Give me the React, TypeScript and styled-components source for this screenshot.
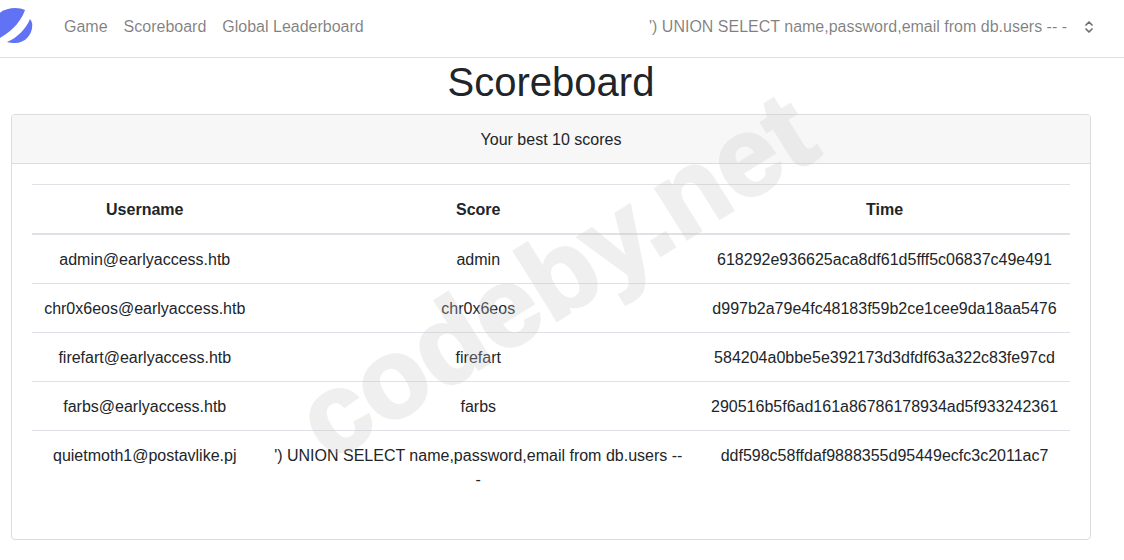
import React from "react";
import styled, { createGlobalStyle } from "styled-components";

const Global = createGlobalStyle`
  html, body { margin: 0; padding: 0; background: #fff; }
  body {
    font-family: "Liberation Sans", Arial, sans-serif;
    font-size: 16px;
    line-height: 1.5;
    color: #212529;
    overflow: hidden;
  }
`;

const Page = styled.div`
  position: relative;
  width: 1124px;
  height: 560px;
  overflow: hidden;
`;

const Navbar = styled.nav`
  display: flex;
  align-items: center;
  height: 53px;
  padding-bottom: 4px;
  border-bottom: 1px solid #dfdfdf;
  box-sizing: content-box;
`;

const Logo = styled.svg`
  width: 33px;
  height: 36px;
  margin-right: 31px;
  margin-top: -1px;
  flex: none;
`;

const NavLink = styled.a`
  color: rgba(0, 0, 0, 0.5);
  margin-right: 16px;
  text-decoration: none;
`;

const UserMenu = styled.div`
  margin-left: auto;
  display: flex;
  align-items: center;
  margin-right: 29px;
  color: rgba(0, 0, 0, 0.5);
  gap: 16px;
`;

const Main = styled.main`
  width: 1080px;
  margin-left: 11px;
`;

const Title = styled.h1`
  margin: 0 0 8px;
  font-size: 40px;
  font-weight: 400;
  line-height: 48px;
  text-align: center;
`;

const Card = styled.section`
  border: 1px solid #dcdcdc;
  border-radius: 4px;
  height: 426px;
  box-sizing: border-box;
  overflow: hidden;
`;

const CardHeader = styled.header`
  height: 49px;
  box-sizing: border-box;
  padding-top: 13px;
  background: #f7f7f7;
  border-bottom: 1px solid #dcdcdc;
  text-align: center;
`;

const CardBody = styled.div`
  padding: 20px;
`;

const Table = styled.table`
  width: 1038px;
  border-collapse: collapse;
  table-layout: fixed;
`;

const Th = styled.th`
  padding: 13px 12px 11px;
  height: 49px;
  box-sizing: border-box;
  border-top: 1px solid #dee2e6;
  border-bottom: 2px solid #dee2e6;
  font-weight: 700;
  text-align: center;
`;

const Td = styled.td`
  padding: 13px 12px 11px;
  height: 49px;
  box-sizing: border-box;
  border-top: 1px solid #dee2e6;
  text-align: center;
  vertical-align: top;
`;

const Watermark = styled.div`
  position: absolute;
  left: 156px;
  top: 216px;
  width: 800px;
  text-align: center;
  transform: rotate(-32deg);
  font-family: "Liberation Sans", Arial, sans-serif;
  font-weight: 700;
  font-size: 112px;
  line-height: 120px;
  color: #c8c8c8;
  -webkit-text-stroke: 3px #c8c8c8;
  opacity: 0.27;
  pointer-events: none;
  white-space: nowrap;
`;

const rows = [
  ["admin@earlyaccess.htb", "admin", "618292e936625aca8df61d5fff5c06837c49e491"],
  ["chr0x6eos@earlyaccess.htb", "chr0x6eos", "d997b2a79e4fc48183f59b2ce1cee9da18aa5476"],
  ["firefart@earlyaccess.htb", "firefart", "584204a0bbe5e392173d3dfdf63a322c83fe97cd"],
  ["farbs@earlyaccess.htb", "farbs", "290516b5f6ad161a86786178934ad5f933242361"],
  ["quietmoth1@postavlike.pj", "') UNION SELECT name,password,email from db.users -- -", "ddf598c58ffdaf9888355d95449ecfc3c2011ac7"],
];

export default function App() {
  return (
    <Page>
      <Global />
      <Navbar>
        <Logo viewBox="0 0 33 36" aria-hidden="true">
          <path fill="#6173f4" d="M0 4.700C4 1.500 10 0 15 0c4 0 7.500.7 10 2C22 11 14 22 0 30Z" />
          <path fill="#6173f4" d="M30 11c1.500 2 2.300 4 2.300 6 0 10-7.300 18-17.300 18-3 0-5.500-.2-8-1C17 30 26 21 30 11Z" />
        </Logo>
        <NavLink>Game</NavLink>
        <NavLink>Scoreboard</NavLink>
        <NavLink>Global Leaderboard</NavLink>
        <UserMenu>
          <span>') UNION SELECT name,password,email from db.users -- -</span>
          <svg width="12" height="16" viewBox="0 0 12 16" fill="none" stroke="#6f6f6f" strokeWidth="1.700" strokeLinecap="round" strokeLinejoin="round" aria-hidden="true">
            <path d="M3 6l3-3 3 3" />
            <path d="M3 10l3 3 3-3" />
          </svg>
        </UserMenu>
      </Navbar>
      <Main>
        <Title>Scoreboard</Title>
        <Card>
          <CardHeader>Your best 10 scores</CardHeader>
          <CardBody>
            <Table>
              <colgroup>
                <col style={{ width: 225.5 }} />
                <col style={{ width: 441.5 }} />
                <col style={{ width: 371 }} />
              </colgroup>
              <thead>
                <tr>
                  <Th>Username</Th>
                  <Th>Score</Th>
                  <Th>Time</Th>
                </tr>
              </thead>
              <tbody>
                {rows.map((r) => (
                  <tr key={r[0]}>
                    <Td>{r[0]}</Td>
                    <Td>{r[1]}</Td>
                    <Td>{r[2]}</Td>
                  </tr>
                ))}
              </tbody>
            </Table>
          </CardBody>
        </Card>
      </Main>
      <Watermark>codeby.net</Watermark>
    </Page>
  );
}
